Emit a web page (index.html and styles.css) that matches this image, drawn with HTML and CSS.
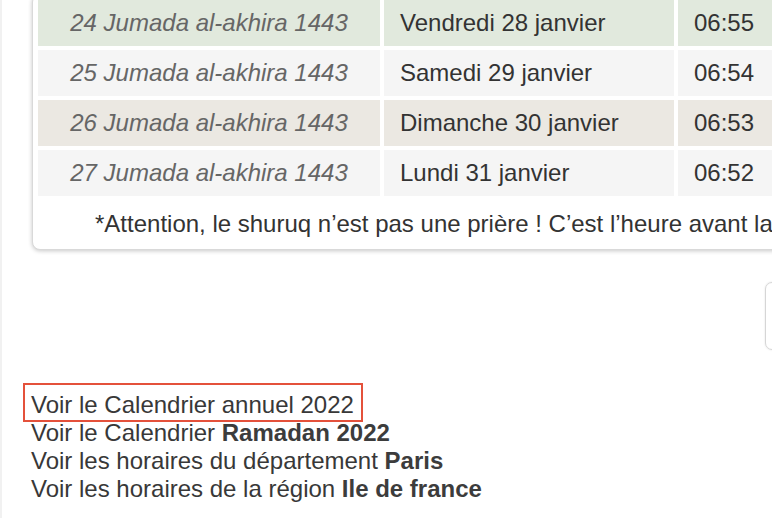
FILE: index.html
```html
<!DOCTYPE html>
<html lang="fr">
<head>
<meta charset="utf-8">
<title>Horaires</title>
<link rel="stylesheet" href="styles.css">
</head>
<body>
<div class="page">
  <div class="card">
    <table class="times">
      <tr class="r-today">
        <td class="hijri">24 Jumada al-akhira 1443</td>
        <td class="greg">Vendredi 28 janvier</td>
        <td class="time">06:55</td>
      </tr>
      <tr class="r-plain">
        <td class="hijri">25 Jumada al-akhira 1443</td>
        <td class="greg">Samedi 29 janvier</td>
        <td class="time">06:54</td>
      </tr>
      <tr class="r-weekend">
        <td class="hijri">26 Jumada al-akhira 1443</td>
        <td class="greg">Dimanche 30 janvier</td>
        <td class="time">06:53</td>
      </tr>
      <tr class="r-plain">
        <td class="hijri">27 Jumada al-akhira 1443</td>
        <td class="greg">Lundi 31 janvier</td>
        <td class="time">06:52</td>
      </tr>
    </table>
    <p class="note">*Attention, le shuruq n’est pas une prière ! C’est l’heure avant la</p>
  </div>
  <div class="side-box"></div>
  <ul class="links">
    <li><a class="link highlighted" href="#">Voir le Calendrier annuel 2022</a></li>
    <li><a class="link" href="#">Voir le Calendrier <b>Ramadan 2022</b></a></li>
    <li><a class="link" href="#">Voir les horaires du département <b>Paris</b></a></li>
    <li><a class="link" href="#">Voir les horaires de la région <b>Ile de france</b></a></li>
  </ul>
</div>
</body>
</html>
```
FILE: styles.css
```css
html, body {
  margin: 0;
  padding: 0;
  background: #ffffff;
  overflow: hidden;
}

body {
  font-family: "Liberation Sans", Arial, Helvetica, sans-serif;
  font-size: 24px;
  color: #333333;
}

.page {
  width: 1200px;
  min-height: 524px;
  border-left: 2px solid #f1f1f1;
}

.card {
  margin: -6px 0 0 30px;
  width: 1040px;
  padding: 1px;
  border: 1px solid #d9d9d9;
  border-radius: 8px;
  background: #ffffff;
  box-shadow: 0 1px 4px rgba(0, 0, 0, 0.22);
}

.times {
  border-collapse: separate;
  border-spacing: 4px;
}

.times td {
  height: 46px;
  padding: 0 16px;
  vertical-align: middle;
  line-height: 28px;
  white-space: nowrap;
  box-sizing: border-box;
}

.hijri {
  width: 342px;
  text-align: center;
  font-style: italic;
  color: #666666;
}

.greg {
  width: 290px;
  color: #333333;
}

.time {
  width: 200px;
  color: #333333;
}

.r-today td { background: #e1e9dd; }
.r-plain td { background: #f5f5f5; }
.r-weekend td { background: #ebe8e2; }

.note {
  margin: 0;
  padding: 10px 0 10px 61px;
  line-height: 28px;
  white-space: nowrap;
  color: #333333;
}

.side-box {
  margin: 32px 0 0 763px;
  width: 100px;
  height: 66px;
  border: 1px solid #d6d6d6;
  border-radius: 7px;
  box-shadow: 0 0 2px rgba(0, 0, 0, 0.12);
}

.links {
  list-style: none;
  margin: 41px 0 0 0;
  padding: 0 0 0 29px;
  line-height: 28px;
}

.link {
  color: #383838;
  text-decoration: none;
}

.link b {
  color: #3c3c3c;
}

.highlighted {
  position: relative;
  display: inline-block;
}

.highlighted::after {
  content: "";
  position: absolute;
  left: -8px;
  right: -9px;
  top: -8px;
  bottom: -3px;
  border: 2px solid #e4513b;
}
```
